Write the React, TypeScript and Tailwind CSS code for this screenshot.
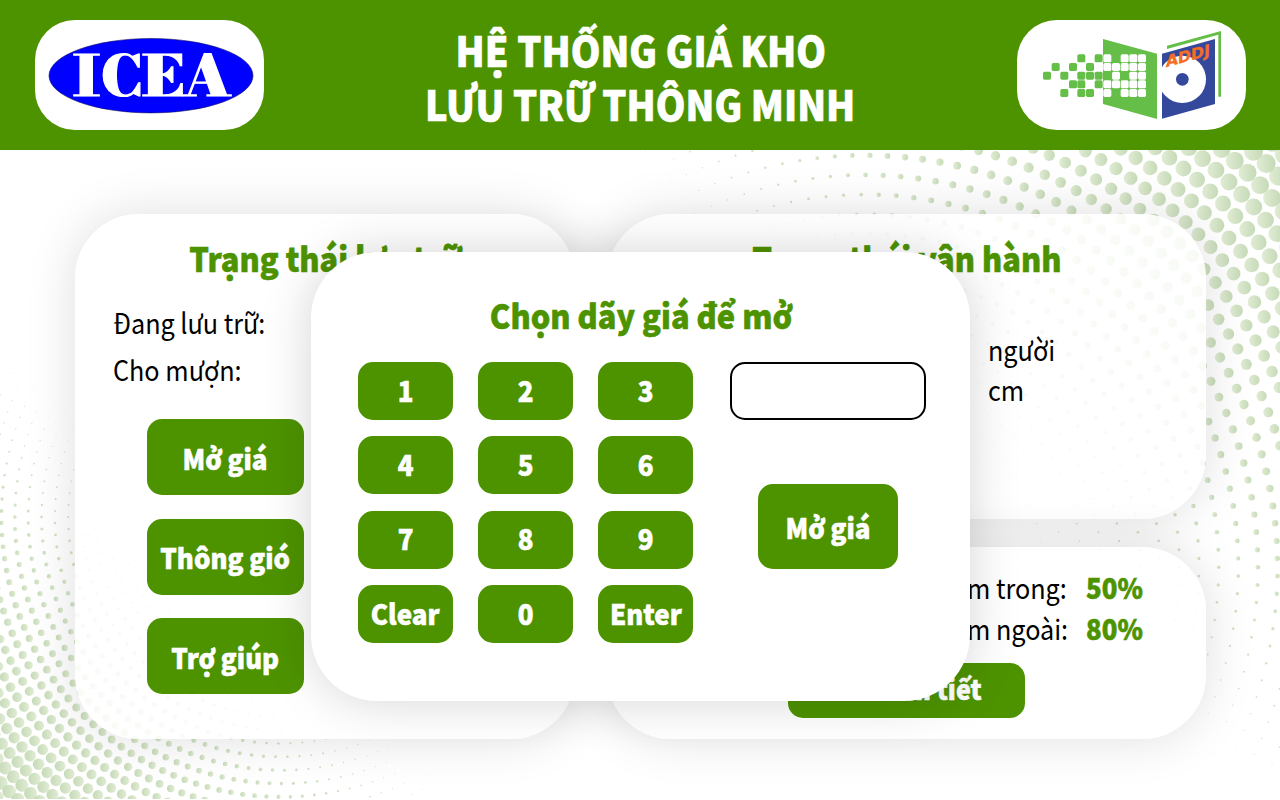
import React from "react";

type Dot = { x: number; y: number; r: number };

const SIZE_STOPS: [number, number][] = [
  [420, 0], [490, 0.45], [536, 0.8], [600, 1.25], [654, 1.75], [714, 2.65],
  [766, 3.5], [810, 4.2], [861, 5.1], [1103, 9.5], [1200, 11],
];

function dotRadius(s: number): number {
  if (s <= SIZE_STOPS[0][0]) return 0;
  for (let i = 1; i < SIZE_STOPS.length; i++) {
    const [s1, r1] = SIZE_STOPS[i];
    const [s0, r0] = SIZE_STOPS[i - 1];
    if (s <= s1) return r0 + ((s - s0) / (s1 - s0)) * (r1 - r0);
  }
  return 11;
}

function topRightDots(): Dot[] {
  const out: Dot[] = [];
  for (let k = -19; k <= 12; k++) {
    const n = 147 + 7 * k;
    const R = 412 + 19.62 * k;
    for (let i = 0; i < n; i++) {
      const a = ((i + (k % 2 === 0 ? 0.5 : 0)) / n) * Math.PI * 2;
      const x = 865.4 + R * Math.cos(a);
      const y = 567.3 - R * Math.sin(a);
      const r = dotRadius(x - y);
      if (r > 0.2 && x > 600 && x < 1292 && y > 138 && y < 810) out.push({ x, y, r });
    }
  }
  return out;
}

function bottomLeftDots(): Dot[] {
  const out: Dot[] = [];
  for (let k = -18; k <= 16; k++) {
    const n = 140 + 7 * k;
    const R = 266.6 + 13.35 * k;
    for (let i = 0; i < n; i++) {
      const a = ((i + (k % 2 === 0 ? 0 : 0.5)) / n) * Math.PI * 2;
      const x = 281.6 - R * Math.cos(a);
      const y = 517 + R * Math.sin(a);
      const r = dotRadius(714 + (y - x - 506) / 0.69) * 0.7;
      if (r > 0.2 && x < 600 && x > -8 && y > 370 && y < 808) out.push({ x, y, r });
    }
  }
  return out;
}

const DOTS_TR = topRightDots();
const DOTS_BL = bottomLeftDots();

function Halftone() {
  return (
    <svg className="absolute inset-0" width="1280" height="649" viewBox="0 150 1280 649" aria-hidden="true">
      <defs>
        <linearGradient id="dotA">
          <stop offset="0" stopColor="#e1ecd4" />
          <stop offset="1" stopColor="#c5dab7" />
        </linearGradient>
        <linearGradient id="dotB">
          <stop offset="0" stopColor="#c5dab7" />
          <stop offset="1" stopColor="#e1ecd4" />
        </linearGradient>
      </defs>
      {DOTS_TR.map((d, i) => <circle key={i} cx={d.x} cy={d.y} r={d.r} fill="url(#dotA)" />)}
      {DOTS_BL.map((d, i) => <circle key={i} cx={d.x} cy={d.y} r={d.r} fill="url(#dotB)" />)}
    </svg>
  );
}

function IceaLogo() {
  return (
    <svg width="229" height="110" viewBox="35 20 229 110">
      <ellipse cx="151" cy="75.7" rx="102" ry="37.2" fill="#0000fe" stroke="#101060" strokeWidth="0.6" />
      <text
        y="95.5"
        fill="#fff"
        stroke="#fff"
        strokeWidth="1.2"
        className="font-['Bodoni_Moda','Liberation_Serif',serif] text-[54px] font-black"
      >
        <tspan x="73" textLength="27" lengthAdjust="spacingAndGlyphs">I</tspan>
        <tspan x="101" textLength="41" lengthAdjust="spacingAndGlyphs">C</tspan>
        <tspan x="142" textLength="42" lengthAdjust="spacingAndGlyphs">E</tspan>
        <tspan x="182" textLength="50" lengthAdjust="spacingAndGlyphs">A</tspan>
      </text>
    </svg>
  );
}

const GREEN_CELLS: [number, number][] = [
  [232, 163], [284, 163], [155, 189], [207, 189], [258, 189], [129, 215], [181, 215], [232, 215],
  [258, 215], [284, 215], [207, 241], [232, 241], [284, 241], [181, 267], [232, 267], [258, 267],
];
const WHITE_CELLS: [number, number][] = [
  [310, 163], [362, 163], [388, 163], [414, 163],
  [310, 189], [336, 189], [362, 189], [388, 189], [414, 189],
  [336, 215], [388, 215], [414, 215],
  [310, 241], [336, 241], [362, 241], [388, 241], [414, 241],
  [310, 267], [362, 267], [388, 267], [414, 267],
];

function AddjLogo() {
  return (
    <svg width="229" height="110" viewBox="51 60 687 330">
      <defs>
        <clipPath id="cover">
          <path d="M486 161L645 117V312L486 356Z" />
        </clipPath>
      </defs>
      <path d="M309 117L471 161V357L309 312Z" fill="#65be48" />
      {GREEN_CELLS.map(([x, y]) => <rect key={`${x}-${y}`} x={x} y={y} width="24" height="24" rx="5" fill="#65be48" />)}
      {WHITE_CELLS.map(([x, y]) => <rect key={`${x}-${y}`} x={x} y={y} width="24" height="24" rx="5" fill="#fff" />)}
      <path d="M486 161L645 117V312L486 356Z" fill="#34489c" />
      <g clipPath="url(#cover)">
        <circle cx="547" cy="238" r="71" fill="#fff" />
      </g>
      <circle cx="547" cy="238" r="19" fill="#34489c" />
      <path d="M501 137L663 93V290H655V104L501 147Z" fill="#65be48" />
      <text
        transform="translate(497 202) rotate(-15) skewX(-16)"
        textLength="137"
        lengthAdjust="spacingAndGlyphs"
        fill="#f46d25"
        stroke="#f46d25"
        strokeWidth="1"
        className="font-['DejaVu_Sans',sans-serif] text-[46px] font-bold"
      >
        ADDJ
      </text>
    </svg>
  );
}

function Label({ children, className = "scale-x-90" }: { children: React.ReactNode; className?: string }) {
  return <span className={`inline-block whitespace-nowrap ${className}`}>{children}</span>;
}

function Button({ children, className }: { children: React.ReactNode; className: string }) {
  return (
    <button className={`flex shrink-0 items-center justify-center rounded-[15px] bg-[#4d9300] leading-none font-black text-white [-webkit-text-stroke:0.6px_white] ${className}`}>
      <Label className="scale-x-[0.925]">{children}</Label>
    </button>
  );
}

function Title({ children }: { children: React.ReactNode }) {
  return (
    <h2 className="text-center text-[34px] leading-[50px] font-black text-[#4d9300] [-webkit-text-stroke:0.6px_#4d9300]">
      <Label className="scale-x-[0.905]">{children}</Label>
    </h2>
  );
}

const PANEL = "rounded-[64px] bg-white/85 shadow-[0_0_50px_rgba(0,0,0,0.13)]";
const ITEM = "origin-left scale-x-90 self-start";
const VALUE = "origin-left scale-x-[0.92] font-black text-[#4d9300] [-webkit-text-stroke:0.6px_#4d9300]";
const KEYS = ["1", "2", "3", "4", "5", "6", "7", "8", "9", "Clear", "0", "Enter"];

export default function App() {
  return (
    <div className="relative flex h-[800px] w-[1280px] flex-col overflow-hidden bg-white font-['Noto_Sans_CJK_JP','Noto_Sans',sans-serif] text-black">
      <header className="z-10 flex h-[150px] shrink-0 items-start justify-between bg-[#4d9300] pr-[34px] pl-[35px]">
        <div className="mt-5 overflow-hidden rounded-[40px] bg-white"><IceaLogo /></div>
        <h1 className="flex flex-col items-center pt-[22px] text-[42px] leading-[54px] font-black text-white [-webkit-text-stroke:0.7px_white]">
          <Label>HỆ THỐNG GIÁ KHO</Label>
          <Label>LƯU TRỮ THÔNG MINH</Label>
        </h1>
        <div className="mt-5 overflow-hidden rounded-[40px] bg-white"><AddjLogo /></div>
      </header>

      <main className="relative flex h-[650px] gap-[32px] pt-[64px] pl-[75px]">
        <Halftone />
        <section className={`relative flex h-[525px] w-[500px] flex-col pt-[19px] ${PANEL}`}>
          <Title>Trạng thái lưu trữ</Title>
          <div className="mt-[16px] flex flex-col pl-[38px] text-[28px] leading-[47px]">
            <Label className={ITEM}>Đang lưu trữ:</Label>
            <Label className={ITEM}>Cho mượn:</Label>
          </div>
          <div className="mt-[26px] ml-[72px] flex flex-col gap-[23.5px] text-[28px]">
            <Button className="h-[76px] w-[157px] pt-[1px]">Mở giá</Button>
            <Button className="h-[76px] w-[157px] pt-[1px]">Thông gió</Button>
            <Button className="h-[76px] w-[157px] pt-[1px]">Trợ giúp</Button>
          </div>
        </section>

        <div className="relative flex w-[599px] flex-col gap-[28px]">
          <section className={`h-[305px] pt-[19px] ${PANEL}`}>
            <Title>Trạng thái vận hành</Title>
            <div className="mt-[46px] flex flex-col pl-[381px] text-[28px] leading-[40px]">
              <Label className={ITEM}>người</Label>
              <Label className={ITEM}>cm</Label>
            </div>
          </section>
          <section className={`flex h-[192px] flex-col items-center pt-[20px] ${PANEL}`}>
            <div className="grid w-full grid-cols-[479px_1fr] text-[28px] leading-[41px]">
              <Label className="origin-left scale-x-90 pl-[341px]">Độ ẩm trong:</Label>
              <Label className={VALUE}>50%</Label>
              <Label className="origin-left scale-x-90 pl-[341px]">Độ ẩm ngoài:</Label>
              <Label className={VALUE}>80%</Label>
            </div>
            <Button className="mt-[14px] h-[55px] w-[237px] pb-[5px] text-[27px]">Xem chi tiết</Button>
          </section>
        </div>
      </main>

      <div
        role="dialog"
        className="absolute top-[252px] left-[311px] z-20 h-[449px] w-[659px] rounded-[66px] bg-white pt-[38px] shadow-[0_0_50px_rgba(0,0,0,0.17)]"
      >
        <Title>Chọn dãy giá để mở</Title>
        <div className="mt-[22px] flex pl-[47px] text-[28px]">
          <div className="grid grid-cols-[repeat(3,95px)] gap-x-[25px] gap-y-[16.4px]">
            {KEYS.map((k) => <Button key={k} className="h-[58px] pb-[3px]">{k}</Button>)}
          </div>
          <div className="ml-[37px] flex flex-col items-center gap-[64px]">
            <input className="h-[58px] w-[196px] rounded-[15px] border-2 border-black bg-white px-4" />
            <Button className="h-[85px] w-[140px] pt-[1px]">Mở giá</Button>
          </div>
        </div>
      </div>
    </div>
  );
}
